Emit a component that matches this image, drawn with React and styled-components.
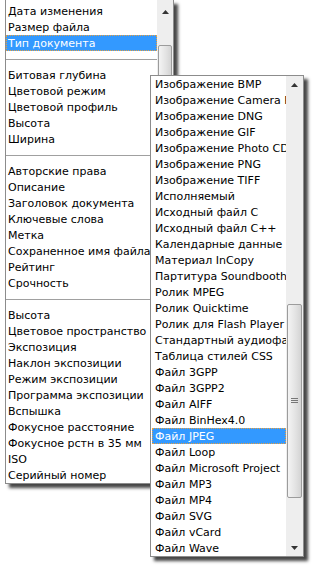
import React from "react";
import styled, { createGlobalStyle } from "styled-components";

const GlobalStyle = createGlobalStyle`
  html, body {
    margin: 0;
    padding: 0;
    background: #fff;
  }
  body {
    font-family: "DejaVu Sans", "Liberation Sans", sans-serif;
    font-size: 11px;
    color: #000;
  }
`;

const Page = styled.div`
  position: relative;
  width: 313px;
  height: 569px;
  overflow: hidden;
  background: #fff;
`;

const ListBox = styled.div`
  display: flex;
  box-sizing: border-box;
  width: ${(p) => p.$width}px;
  height: ${(p) => p.$height}px;
  background: #fff;
  border: 1px solid #8c8c8c;
  box-shadow: 4px 4px 3px rgba(0, 0, 0, 0.72);
`;

const FieldList = styled(ListBox)`
  margin-left: 5px;
  border-top: none;
`;

const Popup = styled(ListBox)`
  position: absolute;
  left: 150px;
  top: 75px;
`;

const Items = styled.div`
  flex: 1;
  min-width: 0;
  padding: ${(p) => p.$pad};
  overflow: hidden;
`;

const Item = styled.div`
  height: 16px;
  line-height: 17px;
  padding-left: ${(p) => p.$indent}px;
  white-space: nowrap;
  overflow: hidden;
  ${(p) =>
    p.$selected &&
    `
    background: #3399ff;
    color: #fff;
    outline: 1px dotted #e8a040;
    outline-offset: -1px;
  `}
`;

const Separator = styled.div`
  height: 16px;
  padding-top: 8px;
  box-sizing: border-box;

  &::after {
    content: "";
    display: block;
    height: 1px;
    background: #a0a0a0;
  }
`;

const Scrollbar = styled.div`
  width: ${(p) => p.$width}px;
  flex-shrink: 0;
  display: flex;
  flex-direction: column;
  background: #eeeeee;
  padding-top: ${(p) => p.$top || 0}px;
`;

const ArrowButton = styled.div`
  height: 17px;
  display: flex;
  align-items: center;
  justify-content: center;
  flex-shrink: 0;
`;

const Track = styled.div`
  flex: 1;
  min-height: 0;
  overflow: hidden;
`;

const Thumb = styled.div`
  box-sizing: border-box;
  margin: 0 1px;
  border: 1px solid #9c9c9c;
  border-radius: 2px;
  background: linear-gradient(to right, #f4f4f4, #e2e2e2 60%, #d4d4d4);
  display: flex;
  align-items: center;
  justify-content: center;
`;

const Arrow = ({ down }) => (
  <svg width="7" height="4" viewBox="0 0 7 4">
    {down ? <polygon points="0,0 7,0 3.5,4" fill="#333" /> : <polygon points="0,4 7,4 3.5,0" fill="#333" />}
  </svg>
);

const Grip = () => (
  <svg width="7" height="6" viewBox="0 0 7 6">
    <rect x="0" y="0" width="7" height="1" fill="#777" />
    <rect x="0" y="2" width="7" height="1" fill="#777" />
    <rect x="0" y="4" width="7" height="1" fill="#777" />
  </svg>
);

const fieldGroups = [
  ["Дата изменения", "Размер файла", "Тип документа"],
  ["Битовая глубина", "Цветовой режим", "Цветовой профиль", "Высота", "Ширина"],
  [
    "Авторские права",
    "Описание",
    "Заголовок документа",
    "Ключевые слова",
    "Метка",
    "Сохраненное имя файла",
    "Рейтинг",
    "Срочность",
  ],
  [
    "Высота",
    "Цветовое пространство EXIF",
    "Экспозиция",
    "Наклон экспозиции",
    "Режим экспозиции",
    "Программа экспозиции",
    "Вспышка",
    "Фокусное расстояние",
    "Фокусное рстн в 35 мм",
    "ISO",
    "Серийный номер",
  ],
];

const docTypes = [
  "Изображение BMP",
  "Изображение Camera Raw",
  "Изображение DNG",
  "Изображение GIF",
  "Изображение Photo CD",
  "Изображение PNG",
  "Изображение TIFF",
  "Исполняемый",
  "Исходный файл C",
  "Исходный файл C++",
  "Календарные данные",
  "Материал InCopy",
  "Партитура Soundbooth",
  "Ролик MPEG",
  "Ролик Quicktime",
  "Ролик для Flash Player",
  "Стандартный аудиофайл",
  "Таблица стилей CSS",
  "Файл 3GPP",
  "Файл 3GPP2",
  "Файл AIFF",
  "Файл BinHex4.0",
  "Файл JPEG",
  "Файл Loop",
  "Файл Microsoft Project",
  "Файл MP3",
  "Файл MP4",
  "Файл SVG",
  "Файл vCard",
  "Файл Wave",
];

const App = () => {
  return (
    <Page>
      <GlobalStyle />
      <FieldList $width={169} $height={484}>
        <Items $pad="3px 0 0 0">
          {fieldGroups.map((group, gi) => (
            <React.Fragment key={gi}>
              {gi > 0 && <Separator />}
              {group.map((name) => (
                <Item key={name} $indent={2} $selected={name === "Тип документа"}>
                  {name}
                </Item>
              ))}
            </React.Fragment>
          ))}
        </Items>
        <Scrollbar $width={16} $top={3}>
          <ArrowButton>
            <Arrow />
          </ArrowButton>
          <Track>
            <Thumb style={{ marginTop: 25, height: 200 }} />
          </Track>
        </Scrollbar>
      </FieldList>

      <Popup $width={154} $height={482}>
        <Items $pad="0 0 0 1px">
          {docTypes.map((name) => (
            <Item key={name} $indent={3} $selected={name === "Файл JPEG"}>
              {name}
            </Item>
          ))}
        </Items>
        <Scrollbar $width={17}>
          <ArrowButton>
            <Arrow />
          </ArrowButton>
          <Track>
            <Thumb style={{ marginTop: 211, height: 194 }}>
              <Grip />
            </Thumb>
          </Track>
          <ArrowButton>
            <Arrow down />
          </ArrowButton>
        </Scrollbar>
      </Popup>
    </Page>
  );
};

export default App;
